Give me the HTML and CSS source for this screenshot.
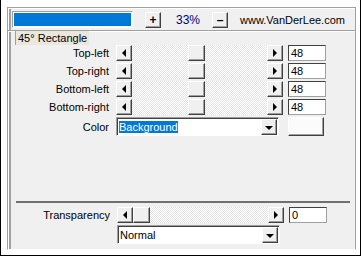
FILE: index.html
```html
<!DOCTYPE html>
<html>
<head>
  <meta charset="utf-8">
  <title>45° Rectangle</title>
  <link rel="stylesheet" href="styles.css">
</head>
<body>
  <div class="frame">
    <div class="panel">
      <div class="top">
        <div class="progress"><div class="fill"></div></div>
        <span class="btn small plus">+</span>
        <span class="zoom">33%</span>
        <span class="btn small">&ndash;</span>
        <span class="site">www.VanDerLee.com</span>
      </div>
      <div class="group">
        <div class="legend">45° Rectangle</div>
        <div class="row">
          <label>Top-left</label>
          <div class="scroll"><span class="btn arr"><i class="left"></i></span><div class="track"><span class="btn thumb mid"></span></div><span class="btn arr"><i class="right"></i></span></div>
          <div class="field">48</div>
        </div>
        <div class="row">
          <label>Top-right</label>
          <div class="scroll"><span class="btn arr"><i class="left"></i></span><div class="track"><span class="btn thumb mid"></span></div><span class="btn arr"><i class="right"></i></span></div>
          <div class="field">48</div>
        </div>
        <div class="row">
          <label>Bottom-left</label>
          <div class="scroll"><span class="btn arr"><i class="left"></i></span><div class="track"><span class="btn thumb mid"></span></div><span class="btn arr"><i class="right"></i></span></div>
          <div class="field">48</div>
        </div>
        <div class="row">
          <label>Bottom-right</label>
          <div class="scroll"><span class="btn arr"><i class="left"></i></span><div class="track"><span class="btn thumb mid"></span></div><span class="btn arr"><i class="right"></i></span></div>
          <div class="field">48</div>
        </div>
        <div class="row tall">
          <label>Color</label>
          <div class="select"><span class="value"><span class="sel">Background</span></span><span class="btn arr"><i class="down"></i></span></div>
          <div class="swatch"></div>
        </div>
      </div>
      <div class="bottom">
        <div class="row">
          <label>Transparency</label>
          <div class="scroll"><span class="btn arr"><i class="left"></i></span><div class="track"><span class="btn thumb"></span></div><span class="btn arr"><i class="right"></i></span></div>
          <div class="field">0</div>
        </div>
        <div class="row tall">
          <label></label>
          <div class="select"><span class="value">Normal</span><span class="btn arr"><i class="down"></i></span></div>
        </div>
      </div>
    </div>
  </div>
</body>
</html>
```

FILE: styles.css
```css
body {
  margin: 0;
  background: #fff;
  font-family: "Liberation Sans", Arial, sans-serif;
  font-size: 11px;
  color: #000;
}
.frame {
  width: 361px;
  height: 256px;
  box-sizing: border-box;
  border: 1px solid #000;
  border-top: none;
  padding: 7px 4px 5px 6px;
}
.panel {
  height: 100%;
  box-sizing: border-box;
  background: #f0f0f0;
  border-top: 1px solid #a0a0a0;
  border-left: 1px solid #a0a0a0;
  border-right: 1px solid #a0a0a0;
  border-bottom: 1px solid #fff;
  box-shadow: inset 1px 0 #fff, inset 0 1px #fff, inset 3px 0 #a0a0a0;
  display: flex;
  flex-direction: column;
}
.top {
  display: flex;
  align-items: flex-start;
  padding: 3px 0 0 4px;
  box-sizing: border-box;
  height: 22px;
}
.progress {
  width: 117px;
  height: 13px;
  background: #fff;
  border: 1px solid;
  border-color: #a0a0a0 #fff #fff #a0a0a0;
  padding: 1px;
}
.fill {
  height: 100%;
  background: #0078d7;
}
.btn {
  box-sizing: border-box;
  background: #f0f0f0;
  border: 1px solid;
  border-color: #fff #404040 #404040 #fff;
  box-shadow: inset -1px -1px #a0a0a0;
  display: flex;
  align-items: center;
  justify-content: center;
}
.small {
  width: 16px;
  height: 16px;
  margin-top: 1px;
  font-size: 12px;
  font-weight: bold;
}
.plus {
  margin-left: 12px;
}
.zoom {
  color: #000080;
  width: 36px;
  margin-left: 15px;
  margin-top: 2px;
  font-size: 12px;
}
.site {
  margin-left: 12px;
  margin-top: 3px;
}
.group {
  border-top: 1px solid #a0a0a0;
  box-shadow: inset 0 1px #fff;
  padding-bottom: 6px;
}
.legend {
  display: inline-block;
  margin-left: 7px;
  padding: 0 2px;
  height: 14px;
  line-height: 14px;
  background: #ebe7dc;
  border-left: 1px solid #a0a0a0;
}
.row {
  display: flex;
  align-items: center;
  height: 16px;
  margin-bottom: 2px;
}
.row.tall {
  height: 19px;
  margin-top: 1px;
}
.row label {
  width: 101px;
  margin-right: 7px;
  text-align: right;
}
.scroll {
  display: flex;
  width: 167px;
  height: 16px;
  margin-right: 5px;
}
.arr {
  width: 16px;
  height: 16px;
  flex: none;
}
.track {
  flex: 1;
  display: flex;
  background: repeating-conic-gradient(#fff 0 25%, #e4e4e4 0 50%) 0 0 / 2px 2px;
}
.track .thumb {
  width: 17px;
  height: 16px;
}
.track .thumb.mid {
  margin-left: 56px;
}
.left, .right, .down {
  width: 0;
  height: 0;
  border: 4px solid transparent;
}
.left {
  border-right: 4px solid #000;
  border-left: none;
}
.right {
  border-left: 4px solid #000;
  border-right: none;
}
.down {
  border-top: 4px solid #000;
  border-bottom: none;
  margin-top: 2px;
}
.field {
  width: 34px;
  height: 14px;
  background: #fff;
  border: 1px solid;
  border-color: #404040 #a0a0a0 #a0a0a0 #404040;
  line-height: 14px;
  padding-left: 2px;
}
.select {
  width: 163px;
  height: 19px;
  box-sizing: border-box;
  display: flex;
  align-items: center;
  background: #fff;
  border: 1px solid;
  border-color: #a0a0a0 #fff #fff #a0a0a0;
  box-shadow: inset 1px 1px #404040;
  padding: 1px 1px 1px 2px;
  margin-right: 9px;
}
.value {
  flex: 1;
}
.sel {
  background: #0078d7;
  color: #fff;
}
.swatch {
  width: 36px;
  height: 19px;
  box-sizing: border-box;
  background: #fbfbfb;
  border: 1px solid;
  border-color: #fff #404040 #404040 #fff;
  box-shadow: inset -1px -1px #a0a0a0;
}
.bottom {
  margin: auto 5px 3px 8px;
  padding-top: 4px;
  border-top: 2px solid #707070;
}
.bottom .row label {
  width: 94px;
}
```
